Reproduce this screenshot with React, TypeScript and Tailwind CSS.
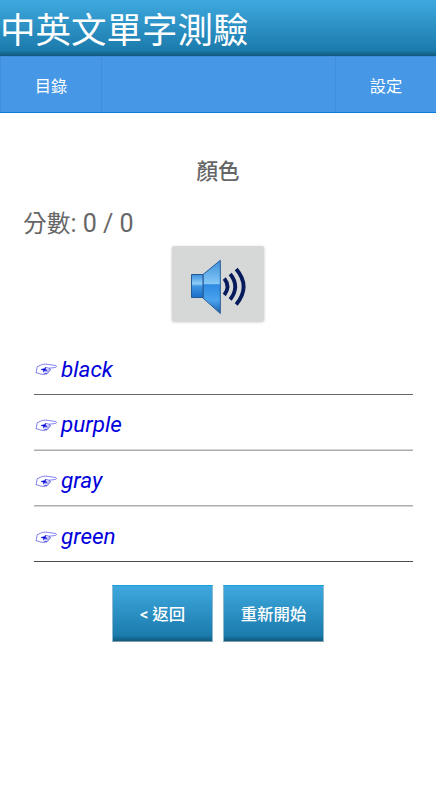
import clsx from "clsx";

const answers = [
  { word: "black", row: "h-[55px]", rule: "h-px bg-[#686868]" },
  { word: "purple", row: "h-[54px]", rule: "h-0.5 bg-linear-to-b from-[#d6d6d6] from-50% to-[#adadad] to-50%" },
  { word: "gray", row: "h-[54px]", rule: "h-0.5 bg-linear-to-b from-[#adadad] from-50% to-[#d6d6d6] to-50%" },
  { word: "green", row: "h-[54px]", rule: "h-px bg-[#4c4c4c]" },
];

function SpeakerIcon() {
  return (
    <svg width="92" height="76" viewBox="0 0 92 76" className="block">
      <defs>
        <linearGradient id="box" x1="0" y1="0" x2="0" y2="1">
          <stop offset="0" stopColor="#3b8fdd" />
          <stop offset="0.4" stopColor="#8fcdf8" />
          <stop offset="0.5" stopColor="#3f97e3" />
          <stop offset="1" stopColor="#1a6cc5" />
        </linearGradient>
        <linearGradient id="cone" x1="0" y1="0" x2="0" y2="1">
          <stop offset="0" stopColor="#3d90da" />
          <stop offset="0.44" stopColor="#85c8f7" />
          <stop offset="0.46" stopColor="#2e8ae2" />
          <stop offset="0.75" stopColor="#4ba3ee" />
          <stop offset="1" stopColor="#1d60ad" />
        </linearGradient>
      </defs>
      <path d="M31 28.5 48.3 14.3V67.5L31 52Z" fill="url(#cone)" stroke="#245b94" />
      <path d="M19.5 28.5H31V51.5H19.5Z" fill="url(#box)" stroke="#245b94" />
      <g fill="none" stroke="#061a5c" strokeWidth="3.8">
        <path d="M52.3 32.5Q58.7 40.5 52.3 49" />
        <path d="M58.2 28Q68.2 40.5 58.2 53.5" />
        <path d="M64.2 23Q79 40.5 64.2 58.5" />
      </g>
    </svg>
  );
}

function HandIcon() {
  return (
    <svg
      width="23"
      height="13"
      viewBox="0 0 23 13"
      className="mr-[3px] ml-px shrink-0"
      fill="none"
      stroke="#0000dc"
      strokeWidth="0.5"
      strokeLinejoin="round"
    >
      <path d="M2.3 3.6 7.5 1.4Q10 .8 13.2 1.4L20.8 2.6Q22.4 3.5 20.4 4.5L14.2 5.2" />
      <path d="M2.3 3.6 1 9.6 4.5 10.7 8.5 11.6 12.2 10.7 13.8 8.7 15.5 7 14.2 5.2 11 4.5" />
      <path d="M10.2 8.9 13.8 8.7M11 7 15.5 7M8.5 10.3 12.2 10.7" />
      <path d="M6 6.4 9.2 5.7 10.8 4.2 10.5 6.4 11.8 7.5 9.6 7.4 8.6 9.2 8.6 7.2Z" fill="#0000dc" />
    </svg>
  );
}

const glossy =
  "bg-linear-to-b from-[#3ea9df] via-[#1b7bac] via-90% to-[#10597c]";

const action =
  "h-[57px] w-[101px] border border-t-[#159fdc] border-r-[#8fbad0] border-b-[#7f9cac] border-l-[#8fbad0] pt-1";

export default function App() {
  return (
    <div className="h-[800px] w-[436px] overflow-hidden bg-white font-['Roboto','Noto_Sans_CJK_TC',sans-serif]">
      <header className={clsx("flex h-14 items-center pt-2", glossy)}>
        <h1 className="text-[35.5px] leading-none text-white">中英文單字測驗</h1>
      </header>

      <nav className="flex h-[57px] border-b border-[#0d7bdd] bg-[#4797e7] text-[16.3px] text-white">
        <button className="w-[102px] border border-b-0 border-[#408ddb] pt-1.5">目錄</button>
        <div className="flex-1 border-t border-[#408ddb]" />
        <button className="w-[101px] border border-r-0 border-b-0 border-[#408ddb] pt-1.5">設定</button>
      </nav>

      <main className="pt-[46px] text-[#666]">
        <h2 className="text-center text-[21.5px] leading-[26px] font-medium">顏色</h2>
        <p className="mt-[22px] ml-[23px] h-[33px] text-[25px] leading-[34px]">
          <span className="text-[23.7px]">分數</span>: 0 / 0
        </p>

        <button className="mt-[6px] ml-[172px] block h-[75px] w-[92px] rounded-xs bg-[#d6d8d7] shadow-[0_1px_3px_rgba(0,0,0,0.25)]">
          <SpeakerIcon />
        </button>

        <ul className="mt-[18px] ml-[34px] w-[379px]">
          {answers.map((a) => (
            <li key={a.word}>
              <div className={clsx("flex items-center pt-[6px] text-[22.5px] text-[#0000dc] italic", a.row)}>
                <HandIcon />
                {a.word}
              </div>
              <div className={a.rule} />
            </li>
          ))}
        </ul>

        <div className="mt-[23px] ml-[112px] flex gap-[10px] text-[16.4px] font-medium text-white">
          <button className={clsx(action, glossy)}>&lt; 返回</button>
          <button className={clsx(action, glossy)}>重新開始</button>
        </div>
      </main>
    </div>
  );
}
